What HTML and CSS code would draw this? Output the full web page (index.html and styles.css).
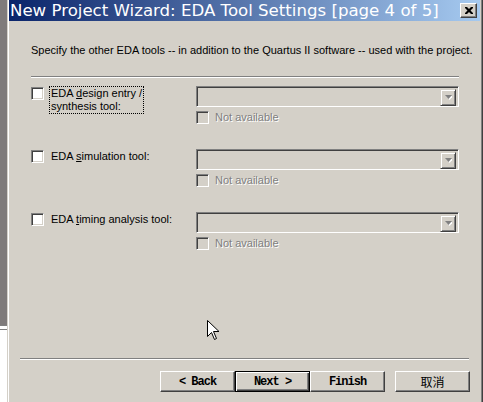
FILE: index.html
```html
<!DOCTYPE html>
<html>
<head>
<meta charset="utf-8">
<link rel="stylesheet" href="styles.css">
</head>
<body>
<div class="screen">
  <div class="backdrop">
    <div class="backdrop-top"></div>
    <div class="backdrop-lines"></div>
    <div class="backdrop-bottom"></div>
  </div>
  <div class="window">
    <div class="titlebar">
      <span class="title">New Project Wizard: EDA Tool Settings [page 4 of 5]</span>
      <span class="close-btn">
        <svg width="8" height="7" viewBox="0 0 8 7"><path d="M0 0h2l2 2 2-2h2v1l-2.5 2.5L8 6v1H6L4 5 2 7H0V6l2.5-2.5L0 1z" fill="#000"/></svg>
      </span>
    </div>
    <div class="content">
      <p class="intro">Specify the other EDA tools -- in addition to the Quartus II software -- used with the project.</p>
      <div class="sep"></div>

      <div class="tool-row">
        <div class="tool-left">
          <span class="cb"></span>
          <span class="label focus">EDA <u>d</u>esign entry /<br>synthesis tool:</span>
        </div>
        <div class="tool-right">
          <div class="combo"><span class="drop-btn"><svg width="7" height="5" viewBox="0 0 7 5"><path d="M1 1h7l-3.5 4z" fill="#fff"/><path d="M0 0h7l-3.5 4z" fill="#808080"/></svg></span></div>
          <div class="na"><span class="cb disabled"></span><span class="na-text">Not available</span></div>
        </div>
      </div>

      <div class="tool-row">
        <div class="tool-left">
          <span class="cb"></span>
          <span class="label">EDA <u>s</u>imulation tool:</span>
        </div>
        <div class="tool-right">
          <div class="combo"><span class="drop-btn"><svg width="7" height="5" viewBox="0 0 7 5"><path d="M1 1h7l-3.5 4z" fill="#fff"/><path d="M0 0h7l-3.5 4z" fill="#808080"/></svg></span></div>
          <div class="na"><span class="cb disabled"></span><span class="na-text">Not available</span></div>
        </div>
      </div>

      <div class="tool-row">
        <div class="tool-left">
          <span class="cb"></span>
          <span class="label">EDA <u>t</u>iming analysis tool:</span>
        </div>
        <div class="tool-right">
          <div class="combo"><span class="drop-btn"><svg width="7" height="5" viewBox="0 0 7 5"><path d="M1 1h7l-3.5 4z" fill="#fff"/><path d="M0 0h7l-3.5 4z" fill="#808080"/></svg></span></div>
          <div class="na"><span class="cb disabled"></span><span class="na-text">Not available</span></div>
        </div>
      </div>

      <div class="spacer"></div>
      <div class="sep bottom-sep"></div>
      <div class="buttons">
        <span class="btn">&lt; Back</span>
        <span class="btn default">Next &gt;</span>
        <span class="btn">Finish</span>
        <span class="btn cancel">取消</span>
      </div>
    </div>
    <svg class="cursor" width="13" height="21" viewBox="0 0 13 21">
      <path d="M0.5 0.5v16l4-4 3 7 2-1-3-7h5.5z" fill="#fff" stroke="#000" stroke-width="1"/>
    </svg>
  </div>
</div>
</body>
</html>
```
FILE: styles.css
```css
html, body {
  margin: 0;
  padding: 0;
}
body {
  width: 483px;
  height: 402px;
  overflow: hidden;
  background: #d4d0c8;
  font-family: "Liberation Sans", Arial, sans-serif;
  font-size: 11px;
  color: #000;
}
.screen {
  display: flex;
  width: 483px;
  height: 402px;
}
.backdrop {
  width: 7px;
  display: flex;
  flex-direction: column;
}
.backdrop-top {
  height: 325px;
  background: #7f7b7b;
}
.backdrop-lines {
  height: 5px;
  background: #fff;
  border-top: 1px solid #808080;
  border-bottom: 1px solid #808080;
  box-sizing: border-box;
}
.backdrop-bottom {
  flex: 1;
  background: #fff;
}
.window {
  position: relative;
  flex: 1;
  display: flex;
  flex-direction: column;
  border-left: 1px solid #d4d0c8;
  border-right: 1px solid #404040;
  box-shadow: inset 1px 0 #fff, inset -1px 0 #808080;
  padding: 0 2px 0 1px;
  box-sizing: border-box;
}
.titlebar {
  height: 21px;
  display: flex;
  align-items: center;
  justify-content: space-between;
  background: linear-gradient(to right, #0a246a, #a6caf0);
  padding: 0 3px 0 1px;
}
.title {
  color: #fff;
  font-family: "DejaVu Sans", Verdana, sans-serif;
  font-size: 16.6px;
  white-space: nowrap;
  line-height: 21px;
}
.close-btn {
  width: 17px;
  height: 15px;
  box-sizing: border-box;
  background: #d4d0c8;
  border: 1px solid;
  border-color: #fff #404040 #404040 #fff;
  box-shadow: inset -1px -1px #808080;
  display: flex;
  align-items: center;
  justify-content: center;
}
.content {
  flex: 1;
  display: flex;
  flex-direction: column;
  padding: 0 0 10px 22px;
}
.intro {
  margin: 23px 0 0 0;
  line-height: 13px;
  white-space: nowrap;
}
.sep {
  width: 428px;
  height: 2px;
  border-top: 1px solid #808080;
  border-bottom: 1px solid #fff;
  box-sizing: border-box;
  margin-top: 19px;
  margin-bottom: 8px;
}
.tool-row {
  display: grid;
  grid-template-columns: 165px 263px;
  height: 63px;
}
.tool-left {
  display: flex;
  align-items: flex-start;
  gap: 5px;
}
.cb {
  display: inline-block;
  width: 13px;
  height: 13px;
  box-sizing: border-box;
  background: #fff;
  border: 1px solid;
  border-color: #808080 #fff #fff #808080;
  box-shadow: inset 1px 1px #404040, inset -1px -1px #d4d0c8;
  margin-top: 1px;
  flex: none;
}
.cb.disabled {
  background: #d4d0c8;
  margin-top: 0;
}
.label {
  line-height: 13px;
  padding: 0 1px;
  border: 1px dotted transparent;
}
.label.focus {
  border-color: #000;
}
.tool-right {
  display: flex;
  flex-direction: column;
}
.combo {
  height: 21px;
  box-sizing: border-box;
  border: 1px solid;
  border-color: #808080 #fff #fff #808080;
  box-shadow: inset 1px 1px #404040, inset -1px -1px #d4d0c8;
  background: #d4d0c8;
  display: flex;
  justify-content: flex-end;
  padding: 2px;
}
.drop-btn {
  width: 16px;
  height: 17px;
  box-sizing: border-box;
  border: 1px solid;
  border-color: #d4d0c8 #404040 #404040 #d4d0c8;
  box-shadow: inset 1px 1px #fff, inset -1px -1px #808080;
  display: flex;
  align-items: center;
  justify-content: center;
}
.na {
  display: flex;
  align-items: center;
  gap: 6px;
  margin-top: 4px;
}
.na-text {
  color: #808080;
  text-shadow: 1px 1px #fff;
  line-height: 13px;
}
.spacer {
  flex: 1;
}
.bottom-sep {
  width: 449px;
  margin-left: -11px;
  margin-bottom: 11px;
}
.buttons {
  display: flex;
  margin-left: 129px;
}
.btn {
  width: 75px;
  height: 21px;
  box-sizing: border-box;
  display: flex;
  align-items: center;
  justify-content: center;
  background: #d4d0c8;
  border: 1px solid;
  border-color: #fff #404040 #404040 #fff;
  box-shadow: inset -1px -1px #808080;
  font-family: "Liberation Mono", "Courier New", monospace;
  font-size: 12px;
  letter-spacing: -1px;
  font-weight: bold;
}
.btn.default {
  border: 1px solid #000;
  box-shadow: inset 1px 1px #fff, inset -1px -1px #404040, inset -2px -2px #808080;
}
.btn.cancel {
  margin-left: 10px;
  font-family: "Noto Sans CJK SC", sans-serif;
  font-weight: normal;
  letter-spacing: 0;
}
.cursor {
  position: absolute;
  left: 199px;
  top: 320px;
}
```
